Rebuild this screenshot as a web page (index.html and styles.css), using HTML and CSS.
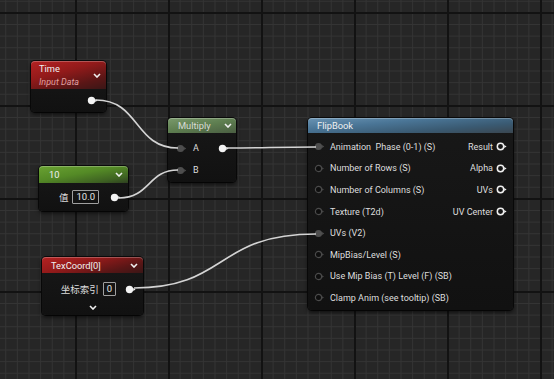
FILE: index.html
```html
<!DOCTYPE html>
<html>
<head>
    <title>Material Graph</title>
    <link rel="stylesheet" href="styles.css">
</head>
<body>
<svg class="defs" width="0" height="0">
    <symbol id="pin-full" viewBox="0 0 11 9">
        <circle cx="4.5" cy="4.5" r="3.7" fill="#f4f4f4"/>
        <polygon points="8.2,2.9 10.6,4.5 8.2,6.1" fill="#f4f4f4"/>
    </symbol>
    <symbol id="pin-linked" viewBox="0 0 11 9">
        <circle cx="4.5" cy="4.5" r="3.6" fill="#4e4e4e"/>
        <polygon points="8.1,3.1 10.2,4.5 8.1,5.9" fill="#4e4e4e"/>
    </symbol>
    <symbol id="pin-open" viewBox="0 0 11 9">
        <circle cx="4.5" cy="4.5" r="3.1" fill="#0e0e0e" stroke="#4a4a4a" stroke-width="1.2"/>
        <polygon points="8.1,3.3 9.9,4.5 8.1,5.7" fill="#4a4a4a"/>
    </symbol>
    <symbol id="pin-out" viewBox="0 0 11 9">
        <circle cx="4.5" cy="4.5" r="3.2" fill="none" stroke="#f0f0f0" stroke-width="1.5"/>
        <polygon points="8.2,2.9 10.6,4.5 8.2,6.1" fill="#f0f0f0"/>
    </symbol>
    <symbol id="chev" viewBox="0 0 8 5">
        <polyline points="1,1 4,4 7,1" fill="none" stroke="#f0f0f0" stroke-width="1.6"/>
    </symbol>
</svg>

<div class="graph">

    <!-- Time -->
    <div class="node node-time">
        <div class="head head-red tall">
            <div class="titles">
                <div class="title">Time</div>
                <div class="subtitle">Input Data</div>
            </div>
            <svg class="chev"><use href="#chev"/></svg>
        </div>
        <div class="body out-only">
            <svg class="pin"><use href="#pin-full"/></svg>
        </div>
    </div>

    <!-- Constant -->
    <div class="node node-const">
        <div class="head head-green">
            <div class="title">10</div>
            <svg class="chev"><use href="#chev"/></svg>
        </div>
        <div class="body value-row">
            <span class="label">值</span>
            <span class="value">10.0</span>
            <svg class="pin"><use href="#pin-full"/></svg>
        </div>
    </div>

    <!-- TexCoord -->
    <div class="node node-tex">
        <div class="head head-red">
            <div class="title">TexCoord[0]</div>
            <svg class="chev"><use href="#chev"/></svg>
        </div>
        <div class="body value-row">
            <span class="label">坐标索引</span>
            <span class="value">0</span>
            <svg class="pin"><use href="#pin-full"/></svg>
        </div>
        <div class="more">
            <svg class="chev"><use href="#chev"/></svg>
        </div>
    </div>

    <!-- Multiply -->
    <div class="node node-mul">
        <div class="head head-mul">
            <div class="title">Multiply</div>
            <svg class="chev"><use href="#chev"/></svg>
        </div>
        <div class="body pins">
            <div class="inputs">
                <div class="row"><svg class="pin"><use href="#pin-linked"/></svg><span>A</span></div>
                <div class="row"><svg class="pin"><use href="#pin-linked"/></svg><span>B</span></div>
            </div>
            <div class="outputs">
                <div class="row"><svg class="pin"><use href="#pin-full"/></svg></div>
            </div>
        </div>
    </div>

    <!-- FlipBook -->
    <div class="node node-flip">
        <div class="head head-blue">
            <div class="title">FlipBook</div>
        </div>
        <div class="body pins">
            <div class="inputs">
                <div class="row"><svg class="pin"><use href="#pin-linked"/></svg><span>Animation&nbsp; Phase (0-1) (S)</span></div>
                <div class="row"><svg class="pin"><use href="#pin-open"/></svg><span>Number of Rows (S)</span></div>
                <div class="row"><svg class="pin"><use href="#pin-open"/></svg><span>Number of Columns (S)</span></div>
                <div class="row"><svg class="pin"><use href="#pin-open"/></svg><span>Texture (T2d)</span></div>
                <div class="row"><svg class="pin"><use href="#pin-linked"/></svg><span>UVs (V2)</span></div>
                <div class="row"><svg class="pin"><use href="#pin-open"/></svg><span>MipBias/Level (S)</span></div>
                <div class="row"><svg class="pin"><use href="#pin-open"/></svg><span>Use Mip Bias (T) Level (F) (SB)</span></div>
                <div class="row"><svg class="pin"><use href="#pin-open"/></svg><span>Clamp Anim (see tooltip) (SB)</span></div>
            </div>
            <div class="outputs">
                <div class="row"><span>Result</span><svg class="pin"><use href="#pin-out"/></svg></div>
                <div class="row"><span>Alpha</span><svg class="pin"><use href="#pin-out"/></svg></div>
                <div class="row"><span>UVs</span><svg class="pin"><use href="#pin-out"/></svg></div>
                <div class="row"><span>UV Center</span><svg class="pin"><use href="#pin-out"/></svg></div>
            </div>
        </div>
    </div>

    <svg class="wires" width="554" height="379">
        <path d="M 96 100 C 140 100, 134 148, 178 148"/>
        <path d="M 119 198 C 150 198, 148 170, 178 170"/>
        <path d="M 226 148 C 270 148, 270 147, 316 147"/>
        <path d="M 134 288 C 228 288, 215 234, 316 234"/>
    </svg>
</div>
</body>
</html>
```

FILE: styles.css
```css
/* graph canvas */
html, body {
    margin: 0;
    padding: 0;
    background: #262626;
}

.defs {
    position: absolute;
}

.graph {
    position: relative;
    width: 554px;
    height: 379px;
    overflow: hidden;
    font-family: Roboto, "Noto Sans CJK SC", sans-serif;
    color: #dedede;
    background-color: #262626;
    background-image:
        linear-gradient(to right, #121212 2px, transparent 2px),
        linear-gradient(to bottom, #121212 2px, transparent 2px),
        linear-gradient(to right, #343434 1px, transparent 1px),
        linear-gradient(to bottom, #343434 1px, transparent 1px);
    background-size: 93px 93px, 93px 93px, 11.625px 11.625px, 11.625px 11.625px;
    background-position: 75px 0, 0 12px, 5.25px 0, 0 0.75px;
}

.wires {
    position: absolute;
    left: 0;
    top: 0;
    pointer-events: none;
}

.wires path {
    fill: none;
    stroke: #d4d4d4;
    stroke-width: 1.6;
}

/* nodes */
.node {
    position: absolute;
    display: flex;
    flex-direction: column;
    background: linear-gradient(to bottom, #181818, #111);
    border-radius: 4px;
    box-shadow: 0 2px 4px rgba(0, 0, 0, 0.7), 0 0 0 1px #0c0c0c;
}

.head {
    display: flex;
    align-items: center;
    justify-content: space-between;
    height: 15px;
    padding: 0 5px 0 10px;
    border-radius: 4px 4px 0 0;
    box-shadow: inset 0 1px 0 rgba(255, 255, 255, 0.25);
}

.head.tall {
    height: 28px;
    padding-left: 8px;
}

.head-red {
    background: linear-gradient(165deg, #b52222 0%, #921a1a 40%, #5a1616 75%, #3a1616 100%);
}

.head-green {
    background: linear-gradient(170deg, #6aa232 0%, #548a26 45%, #3e6222 80%, #2e4020 100%);
}

.head-mul {
    background: linear-gradient(170deg, #7a9a6c 0%, #5e7e50 50%, #4a5e42 100%);
}

.head-blue {
    background: linear-gradient(175deg, #6a94b4 0%, #4a7596 35%, #3a5a72 70%, #3a4650 100%);
}

.title {
    font-size: 9.3px;
    color: #f0f0f0;
    white-space: nowrap;
}

.head-mul .title {
    color: #d8dcd6;
}

.subtitle {
    font-size: 9px;
    font-style: italic;
    color: #e0a0a0;
    margin-top: 3px;
}

.chev {
    width: 8px;
    height: 5px;
}

.pin {
    width: 11px;
    height: 9px;
    flex: none;
}

.body {
    flex: 1;
    display: flex;
    align-items: center;
    font-size: 9px;
}

/* Time */
.node-time {
    left: 31px;
    top: 61px;
    width: 75px;
    height: 51px;
}

.out-only {
    justify-content: flex-end;
    padding-right: 8px;
}

/* value nodes */
.value-row {
    justify-content: flex-end;
    padding-right: 7px;
}

.value-row .label {
    color: #dcdcdc;
    font-size: 9.5px;
    margin-right: 4px;
}

.value {
    border: 1px solid #a0a0a0;
    border-radius: 1px;
    padding: 0 3px;
    height: 12px;
    line-height: 12px;
    font-size: 9.5px;
    color: #e4e4e4;
    margin-right: 11px;
}

.node-const {
    left: 39px;
    top: 166px;
    width: 89px;
    height: 45px;
}

.node-const .head {
    height: 17px;
}

.node-tex {
    left: 42px;
    top: 257px;
    width: 101px;
    height: 58px;
}

.node-tex .head {
    height: 16px;
    padding-left: 9px;
}

.node-tex .body {
    flex: none;
    height: 20px;
    margin-top: 6px;
}

.node-tex .value {
    margin-right: 9px;
}

.more {
    flex: 1;
    display: flex;
    justify-content: center;
    align-items: center;
}

/* pin nodes */
.pins {
    align-items: flex-start;
    justify-content: space-between;
}

.inputs {
    flex: 1;
    min-width: 0;
}

.outputs {
    flex: none;
}

.row {
    display: flex;
    align-items: center;
    white-space: nowrap;
}

.node-mul {
    left: 168px;
    top: 118px;
    width: 68px;
    height: 64px;
}

.node-mul .head {
    padding-right: 4px;
}

.node-mul .pins {
    padding: 4px 7px 0 8px;
}

.node-mul .row {
    height: 22px;
    gap: 6px;
}

.node-flip {
    left: 308px;
    top: 118px;
    width: 205px;
    height: 192px;
}

.node-flip .head {
    padding-left: 9px;
}

.node-flip .pins {
    padding: 3px 6px 0 6px;
}

.node-flip .row {
    height: 21.6px;
}

.node-flip .inputs .row {
    gap: 5px;
}

.node-flip .outputs .row {
    justify-content: flex-end;
    gap: 3px;
}
```
